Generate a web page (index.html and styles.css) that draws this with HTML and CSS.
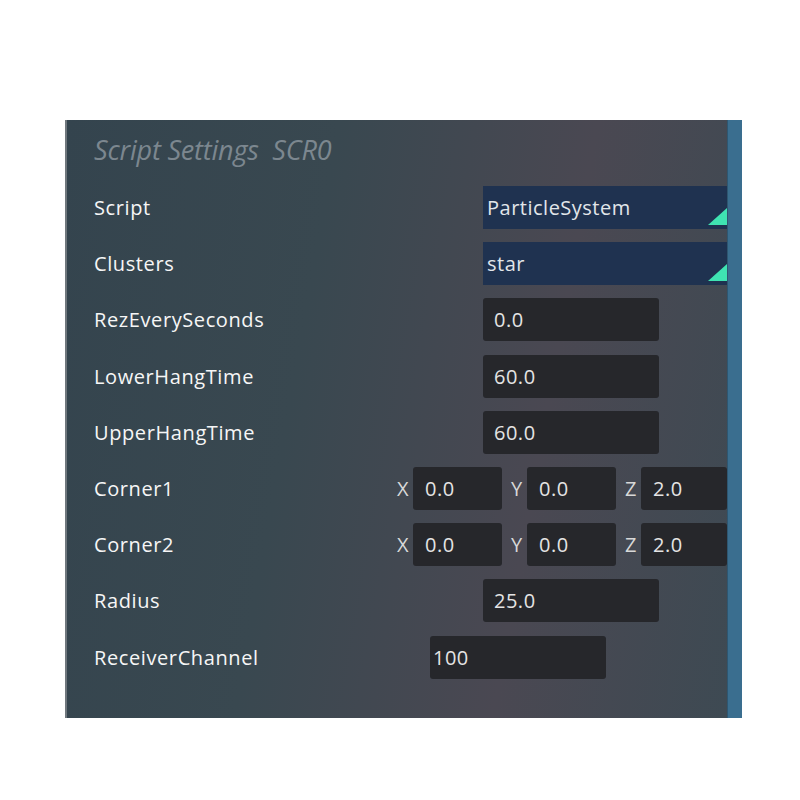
FILE: index.html
```html
<!DOCTYPE html>
<html lang="en">
<head>
    <meta charset="UTF-8">
    <title>Script Settings</title>
    <link rel="stylesheet" href="styles.css">
</head>
<body>
    <div class="panel">
        <div class="panel-body">
            <h2 class="panel-title">Script Settings&nbsp; SCR0</h2>

            <div class="row">
                <span class="label">Script</span>
                <div class="select">ParticleSystem<span class="corner"></span></div>
            </div>
            <div class="row">
                <span class="label">Clusters</span>
                <div class="select">star<span class="corner"></span></div>
            </div>
            <div class="row">
                <span class="label">RezEverySeconds</span>
                <div class="field num">0.0</div>
            </div>
            <div class="row">
                <span class="label">LowerHangTime</span>
                <div class="field num">60.0</div>
            </div>
            <div class="row">
                <span class="label">UpperHangTime</span>
                <div class="field num">60.0</div>
            </div>
            <div class="row">
                <span class="label">Corner1</span>
                <div class="vec">
                    <span class="axis">X</span><div class="field v">0.0</div>
                    <span class="axis">Y</span><div class="field v">0.0</div>
                    <span class="axis">Z</span><div class="field v last">2.0</div>
                </div>
            </div>
            <div class="row">
                <span class="label">Corner2</span>
                <div class="vec">
                    <span class="axis">X</span><div class="field v">0.0</div>
                    <span class="axis">Y</span><div class="field v">0.0</div>
                    <span class="axis">Z</span><div class="field v last">2.0</div>
                </div>
            </div>
            <div class="row">
                <span class="label">Radius</span>
                <div class="field num">25.0</div>
            </div>
            <div class="row">
                <span class="label">ReceiverChannel</span>
                <div class="field chan">100</div>
            </div>
        </div>
        <div class="scrollbar"></div>
    </div>
</body>
</html>
```

FILE: styles.css
```css
* {
    margin: 0;
    padding: 0;
    box-sizing: border-box;
}

body {
    background: #fff;
    font-family: 'Open Sans', sans-serif;
}

.panel {
    display: flex;
    width: 677px;
    height: 598px;
    margin: 120px 0 0 65px;
    border-left: 2px solid #6f777d;
    background: linear-gradient(100deg, #34444e 0%, #394850 35%, #4a4852 68%, #3d4a53 100%);
}

.panel-body {
    flex: 1;
    padding-left: 27px;
}

.panel-title {
    height: 66px;
    padding-top: 11px;
    font-size: 27px;
    font-weight: 400;
    font-style: italic;
    color: #7c878f;
    letter-spacing: -0.2px;
    line-height: 38px;
}

.row {
    display: flex;
    align-items: center;
    height: 43px;
    margin-bottom: 13.2px;
}

.label {
    flex: 1;
    font-size: 20px;
    font-weight: 500;
    letter-spacing: 0.6px;
    color: #f6f6f6;
}

.select {
    position: relative;
    width: 244px;
    height: 43px;
    padding-left: 4px;
    background: #1f3250;
    color: #e2e6ea;
    font-size: 20px;
    font-weight: 500;
    letter-spacing: 0.5px;
    line-height: 43px;
}

.corner {
    position: absolute;
    right: 0;
    bottom: 4px;
    width: 0;
    height: 0;
    border-left: 19px solid transparent;
    border-bottom: 17px solid #3fe3b2;
}

.field {
    height: 43px;
    background: #26272b;
    border-radius: 3px;
    color: #e4e4e4;
    font-size: 20px;
    font-weight: 500;
    letter-spacing: 0.5px;
    line-height: 43px;
}

.num {
    width: 176px;
    margin-right: 68px;
    padding-left: 11px;
}

.chan {
    width: 176px;
    margin-right: 121px;
    padding-left: 3px;
}

.vec {
    display: flex;
    align-items: center;
}

.axis {
    width: 16px;
    font-size: 20px;
    color: #d8d8d8;
}

.v {
    width: 89px;
    margin-right: 9px;
    padding-left: 12px;
}

.v.last {
    width: 86px;
    margin-right: 0;
}

.scrollbar {
    width: 15px;
    background: #3a6e8f;
    border-left: 1px solid #2e5670;
}
```
